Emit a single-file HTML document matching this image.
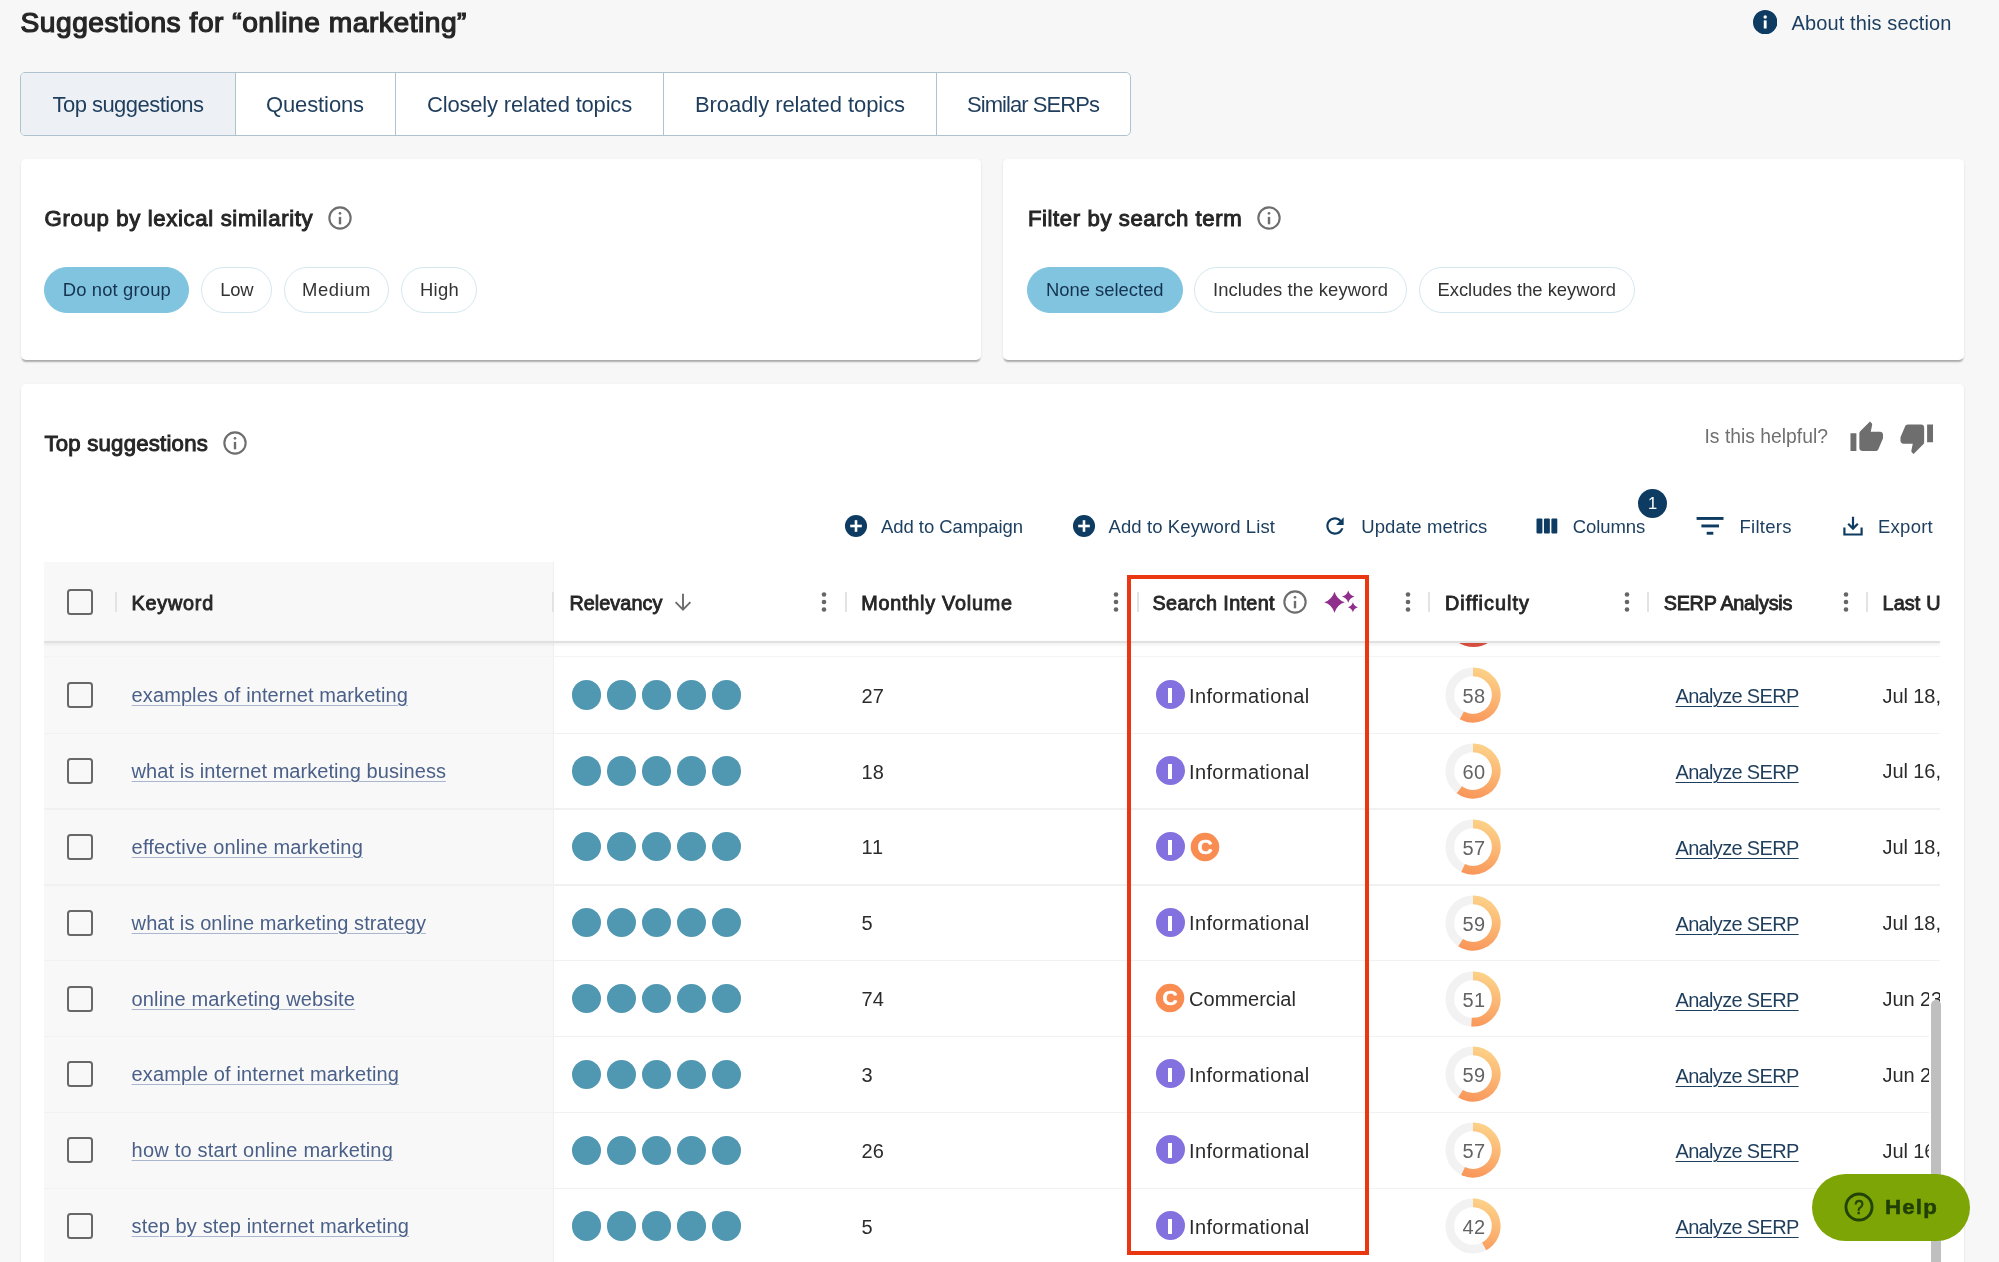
<!DOCTYPE html><html lang="en"><head><meta charset="utf-8"><title>Suggestions for online marketing</title><style>
*{box-sizing:border-box;margin:0;padding:0}
html,body{width:1999px;height:1262px;overflow:hidden;background:#f7f7f7;font-family:"Liberation Sans",sans-serif}
#root{position:absolute;left:0;top:0;width:1999px;height:1262px;overflow:hidden;will-change:transform}
.a{position:absolute}
.t{position:absolute;white-space:nowrap}
.card{position:absolute;background:#fff;border-radius:5px;box-shadow:0 2.200px 1.800px -1px rgba(0,0,0,.28),0 1px 3px rgba(0,0,0,.08)}
.pill{position:absolute;top:266.500px;height:46.5px;border-radius:23.500px;border:1.3px solid #d5e7ef;background:#fff}
.pill.on{background:#80c4e0;border-color:#80c4e0}
.cb{position:absolute;width:26px;height:26px;border:2.800px solid #686868;border-radius:3.500px}
.dot{position:absolute;width:29.4px;height:29.4px;border-radius:50%;background:#5097b1}
.sep{position:absolute;left:44px;width:1896px;height:1.400px;background:#f1f1f1}
.ib{position:absolute;width:29.100px;height:29.100px;border-radius:50%}
.vsep{position:absolute;width:2px;height:20px;top:592px;background:#e3e3e3}
</style></head><body><div id="root">
<svg class="a" style="left:1752.500px;top:9.700px" width="24.400" height="24.400" viewBox="0 0 24 24"><circle cx="12" cy="12" r="12" fill="#0d3b61"/><rect x="10.6" y="10.2" width="2.8" height="8" fill="#fff"/><circle cx="12" cy="6.9" r="1.7" fill="#fff"/></svg>
<div class="a" style="left:20.300px;top:72px;width:1110.500px;height:63.700px;border:1.300px solid #b0c2ce;border-radius:5px;background:#fff;overflow:hidden"><div class="a" style="left:0;top:0;width:214px;height:64px;background:#edf1f5"></div><div class="a" style="left:213.3px;top:0;width:1.300px;height:64px;background:#b0c2ce"></div><div class="a" style="left:373.7px;top:0;width:1.300px;height:64px;background:#b0c2ce"></div><div class="a" style="left:641.7px;top:0;width:1.300px;height:64px;background:#b0c2ce"></div><div class="a" style="left:914.7px;top:0;width:1.300px;height:64px;background:#b0c2ce"></div></div>
<div class="card" style="left:21px;top:159.250px;width:960.200px;height:200.450px"></div>
<div class="card" style="left:1003px;top:159.250px;width:961px;height:200.450px"></div>
<div class="card" style="left:21px;top:384.400px;width:1943px;height:900px"></div>
<svg class="a" style="left:327.2px;top:205.0px" width="26" height="26" viewBox="0 0 26 26"><circle cx="13" cy="13" r="10.65" fill="none" stroke="#6e6e6e" stroke-width="2.100"/><rect x="11.800" y="11.900" width="2.400" height="7.400" fill="#6e6e6e"/><circle cx="13" cy="8.300" r="1.350" fill="#6e6e6e"/></svg>
<svg class="a" style="left:1255.5px;top:205.1px" width="26" height="26" viewBox="0 0 26 26"><circle cx="13" cy="13" r="10.65" fill="none" stroke="#6e6e6e" stroke-width="2.100"/><rect x="11.800" y="11.900" width="2.400" height="7.400" fill="#6e6e6e"/><circle cx="13" cy="8.300" r="1.350" fill="#6e6e6e"/></svg>
<svg class="a" style="left:222.0px;top:429.5px" width="26" height="26" viewBox="0 0 26 26"><circle cx="13" cy="13" r="10.65" fill="none" stroke="#6e6e6e" stroke-width="2.100"/><rect x="11.800" y="11.900" width="2.400" height="7.400" fill="#6e6e6e"/><circle cx="13" cy="8.300" r="1.350" fill="#6e6e6e"/></svg>
<svg class="a" style="left:1282.3px;top:589.0px" width="26" height="26" viewBox="0 0 26 26"><circle cx="13" cy="13" r="10.65" fill="none" stroke="#6e6e6e" stroke-width="2.100"/><rect x="11.800" y="11.900" width="2.400" height="7.400" fill="#6e6e6e"/><circle cx="13" cy="8.300" r="1.350" fill="#6e6e6e"/></svg>
<div class="pill on" style="left:43.8px;width:145.6px"></div>
<div class="pill" style="left:201.2px;width:70.8px"></div>
<div class="pill" style="left:284.0px;width:105.3px"></div>
<div class="pill" style="left:401.0px;width:76.2px"></div>
<div class="pill on" style="left:1027.0px;width:155.6px"></div>
<div class="pill" style="left:1194.2px;width:213.1px"></div>
<div class="pill" style="left:1418.5px;width:216.0px"></div>
<svg class="a" style="left:1848.700px;top:420.200px" width="35.500" height="35.500" viewBox="0 0 24 24"><path fill="#6e6e6e" d="M1 21h4V9H1v12zm22-11c0-1.1-.9-2-2-2h-6.31l.95-4.57.03-.32c0-.41-.17-.79-.44-1.06L14.17 1 7.59 7.59C7.22 7.95 7 8.45 7 9v10c0 1.1.9 2 2 2h9c.83 0 1.54-.5 1.84-1.22l3.02-7.05c.09-.23.14-.47.14-.73v-2z"/></svg>
<svg class="a" style="left:1898.500px;top:419.600px" width="35.500" height="35.500" viewBox="0 0 24 24"><path fill="#6e6e6e" d="M15 3H6c-.83 0-1.54.5-1.84 1.22l-3.02 7.05c-.09.23-.14.47-.14.73v2c0 1.1.9 2 2 2h6.31l-.95 4.57-.03.32c0 .41.17.79.44 1.06L9.83 23l6.59-6.59c.36-.36.58-.86.58-1.41V5c0-1.1-.9-2-2-2zm4 0v12h4V3h-4z"/></svg>
<svg class="a" style="left:844.0px;top:514.0px" width="24" height="24" viewBox="0 0 24 24"><circle cx="12" cy="12" r="11.050" fill="#0d3b61"/><rect x="6.2" y="10.7" width="11.6" height="2.6" fill="#fff"/><rect x="10.7" y="6.2" width="2.6" height="11.6" fill="#fff"/></svg>
<svg class="a" style="left:1071.6px;top:514.0px" width="24" height="24" viewBox="0 0 24 24"><circle cx="12" cy="12" r="11.050" fill="#0d3b61"/><rect x="6.2" y="10.7" width="11.6" height="2.6" fill="#fff"/><rect x="10.7" y="6.2" width="2.6" height="11.6" fill="#fff"/></svg>
<svg class="a" style="left:1322px;top:513px" width="26" height="26" viewBox="0 0 24 24"><path fill="#0d3b61" d="M17.65 6.35C16.2 4.9 14.21 4 12 4c-4.42 0-7.99 3.58-7.99 8s3.57 8 7.99 8c3.73 0 6.84-2.55 7.73-6h-2.08c-.82 2.33-3.04 4-5.65 4-3.31 0-6-2.69-6-6s2.690-6 6-6c1.660 0 3.140.690 4.220 1.780L13 11h7V4l-2.350 2.350z"/></svg>
<svg class="a" style="left:1536px;top:517px" width="23" height="18" viewBox="0 0 23 18"><rect x="0.5" y="1.600" width="5.9" height="15" rx="1" fill="#0d3b61"/><rect x="7.950" y="1.600" width="5.9" height="15" rx="1" fill="#0d3b61"/><rect x="15.400" y="1.600" width="5.9" height="15" rx="1" fill="#0d3b61"/></svg>
<div class="a" style="left:1638px;top:488.800px;width:29.400px;height:29.400px;border-radius:50%;background:#0d3b61;color:#fff;font-size:16.500px;line-height:29.400px;text-align:center">1</div>
<svg class="a" style="left:1696px;top:515px" width="28" height="22" viewBox="0 0 28 22"><rect x="0.600" y="2" width="26.9" height="2.900" fill="#0d3b61"/><rect x="5.400" y="9.500" width="17.6" height="2.900" fill="#0d3b61"/><rect x="10.700" y="16.800" width="6.600" height="2.900" fill="#0d3b61"/></svg>
<svg class="a" style="left:1840.600px;top:514px" width="24" height="24" viewBox="0 0 24 24"><path fill="none" stroke="#0d3b61" stroke-width="2.200" d="M3.4 13.500v7h17.2v-7M12 2.700v11.500M7.200 9.800l4.800 4.800 4.800-4.800"/></svg>
<div class="a" style="left:44px;top:562px;width:510.400px;height:720px;background:#f8f8f8;border-right:1.500px solid #efefef"></div>
<div class="a" style="left:1440px;top:642px;width:70px;height:8px;overflow:hidden"><div class="a" style="left:5.900px;top:-50.400px;width:55px;height:55px;border-radius:50%;border:8.700px solid #dc5140"></div></div>
<div class="a" style="left:44px;top:641.200px;width:1896px;height:2.300px;background:#e1e1e1;box-shadow:0 1.500px 3px rgba(0,0,0,.09)"></div>
<div class="sep" style="top:656px;background:#f4f4f4"></div>
<div class="sep" style="top:732.5px"></div>
<div class="sep" style="top:808.4px"></div>
<div class="sep" style="top:884.2px"></div>
<div class="sep" style="top:960.1px"></div>
<div class="sep" style="top:1036.0px"></div>
<div class="sep" style="top:1111.8px"></div>
<div class="sep" style="top:1187.7px"></div>
<div class="cb" style="left:67px;top:589px"></div>
<div class="vsep" style="left:114.5px"></div>
<div class="vsep" style="left:551.5px"></div>
<div class="vsep" style="left:844.5px"></div>
<div class="vsep" style="left:1136.5px"></div>
<div class="vsep" style="left:1428.0px"></div>
<div class="vsep" style="left:1647.3px"></div>
<div class="vsep" style="left:1866.0px"></div>
<svg class="a" style="left:821.2px;top:591.0px" width="6" height="22" viewBox="0 0 6 22"><circle cx="3" cy="3.500" r="2.300" fill="#666"/><circle cx="3" cy="11" r="2.3" fill="#666"/><circle cx="3" cy="18.5" r="2.3" fill="#666"/></svg>
<svg class="a" style="left:1112.8px;top:591.0px" width="6" height="22" viewBox="0 0 6 22"><circle cx="3" cy="3.500" r="2.300" fill="#666"/><circle cx="3" cy="11" r="2.3" fill="#666"/><circle cx="3" cy="18.5" r="2.3" fill="#666"/></svg>
<svg class="a" style="left:1404.5px;top:591.0px" width="6" height="22" viewBox="0 0 6 22"><circle cx="3" cy="3.500" r="2.300" fill="#666"/><circle cx="3" cy="11" r="2.3" fill="#666"/><circle cx="3" cy="18.5" r="2.3" fill="#666"/></svg>
<svg class="a" style="left:1623.5px;top:591.0px" width="6" height="22" viewBox="0 0 6 22"><circle cx="3" cy="3.500" r="2.300" fill="#666"/><circle cx="3" cy="11" r="2.3" fill="#666"/><circle cx="3" cy="18.5" r="2.3" fill="#666"/></svg>
<svg class="a" style="left:1842.7px;top:591.0px" width="6" height="22" viewBox="0 0 6 22"><circle cx="3" cy="3.500" r="2.300" fill="#666"/><circle cx="3" cy="11" r="2.3" fill="#666"/><circle cx="3" cy="18.5" r="2.3" fill="#666"/></svg>
<svg class="a" style="left:673.300px;top:591px" width="20" height="22" viewBox="0 0 20 22"><path fill="none" stroke="#6b6b6b" stroke-width="1.900" d="M10 2.800v15.500M2.600 11.200l7.400 7.400 7.400-7.400"/></svg>
<svg class="a" style="left:1320px;top:586px" width="42" height="32" viewBox="0 0 42 32"><g fill="#902e8b"><path d="M14.50 5.70 Q16.95 13.68 24.70 16.20 Q16.95 18.72 14.50 26.70 Q12.05 18.72 4.30 16.20 Q12.05 13.68 14.50 5.70Z"/><path d="M28.25 4.40 Q29.64 9.24 34.55 10.60 Q29.64 11.96 28.25 16.80 Q26.86 11.96 21.95 10.60 Q26.86 9.24 28.25 4.40Z"/><path d="M32.90 16.35 Q34.00 20.17 37.90 21.25 Q34.00 22.33 32.90 26.15 Q31.80 22.33 27.90 21.25 Q31.80 20.17 32.90 16.35Z"/></g></svg>
<div class="a" style="left:1870px;top:562px;width:70px;height:720px;overflow:hidden">
<div class="t" style="left:12.500px;top:27px;font-size:19.800px;line-height:28px;font-weight:400;color:#262626;-webkit-text-stroke:0.870px #262626;letter-spacing:0.150px">Last U</div>
<div class="t" style="left:12.5px;top:119.5px;font-size:20px;line-height:28px;color:#2b2b2b;letter-spacing:-0.080px">Jul 18,</div>
<div class="t" style="left:12.5px;top:195.4px;font-size:20px;line-height:28px;color:#2b2b2b;letter-spacing:-0.080px">Jul 16,</div>
<div class="t" style="left:12.5px;top:271.2px;font-size:20px;line-height:28px;color:#2b2b2b;letter-spacing:-0.080px">Jul 18,</div>
<div class="t" style="left:12.5px;top:347.1px;font-size:20px;line-height:28px;color:#2b2b2b;letter-spacing:-0.080px">Jul 18,</div>
<div class="t" style="left:12.5px;top:423.0px;font-size:20px;line-height:28px;color:#2b2b2b;letter-spacing:-0.080px">Jun 23</div>
<div class="t" style="left:12.5px;top:498.8px;font-size:20px;line-height:28px;color:#2b2b2b;letter-spacing:-0.080px">Jun 23</div>
<div class="t" style="left:12.5px;top:574.7px;font-size:20px;line-height:28px;color:#2b2b2b;letter-spacing:-0.080px">Jul 16</div>
<div class="t" style="left:12.5px;top:650.6px;font-size:20px;line-height:28px;color:#2b2b2b;letter-spacing:-0.080px">Jul 16</div>
</div>
<div class="cb" style="left:67px;top:682.0px"></div>
<div class="dot" style="left:571.7px;top:680.3px"></div>
<div class="dot" style="left:606.7px;top:680.3px"></div>
<div class="dot" style="left:641.8px;top:680.3px"></div>
<div class="dot" style="left:676.8px;top:680.3px"></div>
<div class="dot" style="left:711.9px;top:680.3px"></div>
<div class="ib" style="left:1155.5px;top:680.1px;background:#8271de"><div class="a" style="left:12.350px;top:8.150px;width:4.400px;height:14.700px;background:#fff"></div></div>
<svg class="a" style="left:1443.4px;top:665.0px" width="60" height="60" viewBox="1443.4 665.0 60 60"><defs><linearGradient id="g695_58" gradientUnits="userSpaceOnUse" x1="1483.4" y1="668.0" x2="1468.4" y2="722.0"><stop offset="0" stop-color="#fdd389"/><stop offset="1" stop-color="#f9965a"/></linearGradient></defs><circle cx="1473.4" cy="695.0" r="23.2" fill="none" stroke="#f2f2f2" stroke-width="8.7"/><path d="M1473.40 671.80 A23.2 23.2 0 1 1 1462.22 715.33" fill="none" stroke="url(#g695_58)" stroke-width="8.7"/><text x="1474.3" y="703.3" text-anchor="middle" font-family="Liberation Sans, sans-serif" font-size="20" fill="#636363" letter-spacing="0.300">58</text></svg>
<div class="cb" style="left:67px;top:757.9px"></div>
<div class="dot" style="left:571.7px;top:756.2px"></div>
<div class="dot" style="left:606.7px;top:756.2px"></div>
<div class="dot" style="left:641.8px;top:756.2px"></div>
<div class="dot" style="left:676.8px;top:756.2px"></div>
<div class="dot" style="left:711.9px;top:756.2px"></div>
<div class="ib" style="left:1155.5px;top:756.0px;background:#8271de"><div class="a" style="left:12.350px;top:8.150px;width:4.400px;height:14.700px;background:#fff"></div></div>
<svg class="a" style="left:1443.4px;top:740.9px" width="60" height="60" viewBox="1443.4 740.9 60 60"><defs><linearGradient id="g770_60" gradientUnits="userSpaceOnUse" x1="1483.4" y1="743.9" x2="1468.4" y2="797.9"><stop offset="0" stop-color="#fdd389"/><stop offset="1" stop-color="#f9965a"/></linearGradient></defs><circle cx="1473.4" cy="770.9" r="23.2" fill="none" stroke="#f2f2f2" stroke-width="8.7"/><path d="M1473.40 747.70 A23.2 23.2 0 1 1 1459.76 789.67" fill="none" stroke="url(#g770_60)" stroke-width="8.7"/><text x="1474.3" y="779.2" text-anchor="middle" font-family="Liberation Sans, sans-serif" font-size="20" fill="#636363" letter-spacing="0.300">60</text></svg>
<div class="cb" style="left:67px;top:833.7px"></div>
<div class="dot" style="left:571.7px;top:832.0px"></div>
<div class="dot" style="left:606.7px;top:832.0px"></div>
<div class="dot" style="left:641.8px;top:832.0px"></div>
<div class="dot" style="left:676.8px;top:832.0px"></div>
<div class="dot" style="left:711.9px;top:832.0px"></div>
<div class="ib" style="left:1155.5px;top:832.1px;background:#8271de"><div class="a" style="left:12.350px;top:8.150px;width:4.400px;height:14.700px;background:#fff"></div></div>
<svg class="a" style="left:1190.2px;top:831.5px" width="30" height="30" viewBox="0 0 30 30"><circle cx="15" cy="15" r="14.300" fill="#f98c51"/><text x="15" y="21.900" text-anchor="middle" font-family="Liberation Sans, sans-serif" font-weight="700" font-size="21" fill="#fff" stroke="#fff" stroke-width="0.500">C</text></svg>
<svg class="a" style="left:1443.4px;top:816.7px" width="60" height="60" viewBox="1443.4 816.7 60 60"><defs><linearGradient id="g846_57" gradientUnits="userSpaceOnUse" x1="1483.4" y1="819.7" x2="1468.4" y2="873.7"><stop offset="0" stop-color="#fdd389"/><stop offset="1" stop-color="#f9965a"/></linearGradient></defs><circle cx="1473.4" cy="846.7" r="23.2" fill="none" stroke="#f2f2f2" stroke-width="8.7"/><path d="M1473.40 823.50 A23.2 23.2 0 1 1 1463.52 867.69" fill="none" stroke="url(#g846_57)" stroke-width="8.7"/><text x="1474.3" y="855.0" text-anchor="middle" font-family="Liberation Sans, sans-serif" font-size="20" fill="#636363" letter-spacing="0.300">57</text></svg>
<div class="cb" style="left:67px;top:909.6px"></div>
<div class="dot" style="left:571.7px;top:907.9px"></div>
<div class="dot" style="left:606.7px;top:907.9px"></div>
<div class="dot" style="left:641.8px;top:907.9px"></div>
<div class="dot" style="left:676.8px;top:907.9px"></div>
<div class="dot" style="left:711.9px;top:907.9px"></div>
<div class="ib" style="left:1155.5px;top:907.8px;background:#8271de"><div class="a" style="left:12.350px;top:8.150px;width:4.400px;height:14.700px;background:#fff"></div></div>
<svg class="a" style="left:1443.4px;top:892.6px" width="60" height="60" viewBox="1443.4 892.6 60 60"><defs><linearGradient id="g922_59" gradientUnits="userSpaceOnUse" x1="1483.4" y1="895.6" x2="1468.4" y2="949.6"><stop offset="0" stop-color="#fdd389"/><stop offset="1" stop-color="#f9965a"/></linearGradient></defs><circle cx="1473.4" cy="922.6" r="23.2" fill="none" stroke="#f2f2f2" stroke-width="8.7"/><path d="M1473.40 899.40 A23.2 23.2 0 1 1 1460.97 942.19" fill="none" stroke="url(#g922_59)" stroke-width="8.7"/><text x="1474.3" y="930.9" text-anchor="middle" font-family="Liberation Sans, sans-serif" font-size="20" fill="#636363" letter-spacing="0.300">59</text></svg>
<div class="cb" style="left:67px;top:985.5px"></div>
<div class="dot" style="left:571.7px;top:983.8px"></div>
<div class="dot" style="left:606.7px;top:983.8px"></div>
<div class="dot" style="left:641.8px;top:983.8px"></div>
<div class="dot" style="left:676.8px;top:983.8px"></div>
<div class="dot" style="left:711.9px;top:983.8px"></div>
<svg class="a" style="left:1155.1px;top:983.3px" width="30" height="30" viewBox="0 0 30 30"><circle cx="15" cy="15" r="14.300" fill="#f98c51"/><text x="15" y="21.900" text-anchor="middle" font-family="Liberation Sans, sans-serif" font-weight="700" font-size="21" fill="#fff" stroke="#fff" stroke-width="0.500">C</text></svg>
<svg class="a" style="left:1443.4px;top:968.5px" width="60" height="60" viewBox="1443.4 968.5 60 60"><defs><linearGradient id="g998_51" gradientUnits="userSpaceOnUse" x1="1483.4" y1="971.5" x2="1468.4" y2="1025.5"><stop offset="0" stop-color="#fdd389"/><stop offset="1" stop-color="#f9965a"/></linearGradient></defs><circle cx="1473.4" cy="998.5" r="23.2" fill="none" stroke="#f2f2f2" stroke-width="8.7"/><path d="M1473.40 975.30 A23.2 23.2 0 1 1 1471.94 1021.65" fill="none" stroke="url(#g998_51)" stroke-width="8.7"/><text x="1474.3" y="1006.8" text-anchor="middle" font-family="Liberation Sans, sans-serif" font-size="20" fill="#636363" letter-spacing="0.300">51</text></svg>
<div class="cb" style="left:67px;top:1061.3px"></div>
<div class="dot" style="left:571.7px;top:1059.6px"></div>
<div class="dot" style="left:606.7px;top:1059.6px"></div>
<div class="dot" style="left:641.8px;top:1059.6px"></div>
<div class="dot" style="left:676.8px;top:1059.6px"></div>
<div class="dot" style="left:711.9px;top:1059.6px"></div>
<div class="ib" style="left:1155.5px;top:1059.4px;background:#8271de"><div class="a" style="left:12.350px;top:8.150px;width:4.400px;height:14.700px;background:#fff"></div></div>
<svg class="a" style="left:1443.4px;top:1044.3px" width="60" height="60" viewBox="1443.4 1044.3 60 60"><defs><linearGradient id="g1074_59" gradientUnits="userSpaceOnUse" x1="1483.4" y1="1047.3" x2="1468.4" y2="1101.3"><stop offset="0" stop-color="#fdd389"/><stop offset="1" stop-color="#f9965a"/></linearGradient></defs><circle cx="1473.4" cy="1074.3" r="23.2" fill="none" stroke="#f2f2f2" stroke-width="8.7"/><path d="M1473.40 1051.10 A23.2 23.2 0 1 1 1460.97 1093.89" fill="none" stroke="url(#g1074_59)" stroke-width="8.7"/><text x="1474.3" y="1082.6" text-anchor="middle" font-family="Liberation Sans, sans-serif" font-size="20" fill="#636363" letter-spacing="0.300">59</text></svg>
<div class="cb" style="left:67px;top:1137.2px"></div>
<div class="dot" style="left:571.7px;top:1135.5px"></div>
<div class="dot" style="left:606.7px;top:1135.5px"></div>
<div class="dot" style="left:641.8px;top:1135.5px"></div>
<div class="dot" style="left:676.8px;top:1135.5px"></div>
<div class="dot" style="left:711.9px;top:1135.5px"></div>
<div class="ib" style="left:1155.5px;top:1135.3px;background:#8271de"><div class="a" style="left:12.350px;top:8.150px;width:4.400px;height:14.700px;background:#fff"></div></div>
<svg class="a" style="left:1443.4px;top:1120.2px" width="60" height="60" viewBox="1443.4 1120.2 60 60"><defs><linearGradient id="g1150_57" gradientUnits="userSpaceOnUse" x1="1483.4" y1="1123.2" x2="1468.4" y2="1177.2"><stop offset="0" stop-color="#fdd389"/><stop offset="1" stop-color="#f9965a"/></linearGradient></defs><circle cx="1473.4" cy="1150.2" r="23.2" fill="none" stroke="#f2f2f2" stroke-width="8.7"/><path d="M1473.40 1127.00 A23.2 23.2 0 1 1 1463.52 1171.19" fill="none" stroke="url(#g1150_57)" stroke-width="8.7"/><text x="1474.3" y="1158.5" text-anchor="middle" font-family="Liberation Sans, sans-serif" font-size="20" fill="#636363" letter-spacing="0.300">57</text></svg>
<div class="cb" style="left:67px;top:1213.1px"></div>
<div class="dot" style="left:571.7px;top:1211.4px"></div>
<div class="dot" style="left:606.7px;top:1211.4px"></div>
<div class="dot" style="left:641.8px;top:1211.4px"></div>
<div class="dot" style="left:676.8px;top:1211.4px"></div>
<div class="dot" style="left:711.9px;top:1211.4px"></div>
<div class="ib" style="left:1155.5px;top:1211.2px;background:#8271de"><div class="a" style="left:12.350px;top:8.150px;width:4.400px;height:14.700px;background:#fff"></div></div>
<svg class="a" style="left:1443.4px;top:1196.1px" width="60" height="60" viewBox="1443.4 1196.1 60 60"><defs><linearGradient id="g1226_42" gradientUnits="userSpaceOnUse" x1="1483.4" y1="1199.1" x2="1468.4" y2="1253.1"><stop offset="0" stop-color="#fdd389"/><stop offset="1" stop-color="#f9965a"/></linearGradient></defs><circle cx="1473.4" cy="1226.1" r="23.2" fill="none" stroke="#f2f2f2" stroke-width="8.7"/><path d="M1473.40 1202.90 A23.2 23.2 0 0 1 1484.58 1246.43" fill="none" stroke="url(#g1226_42)" stroke-width="8.7"/><text x="1474.3" y="1234.4" text-anchor="middle" font-family="Liberation Sans, sans-serif" font-size="20" fill="#636363" letter-spacing="0.300">42</text></svg>
<div class="t" style="left:20.5px;top:3.2px;font-size:28.2px;line-height:39px;font-weight:400;color:#262626;letter-spacing:0.506px;-webkit-text-stroke:1.24px #262626;">Suggestions for “online marketing”</div>
<div class="t" style="left:1791.5px;top:9.1px;font-size:20px;line-height:28px;font-weight:400;color:#1d3f60;letter-spacing:0.118px;">About this section</div>
<div class="t" style="left:52.5px;top:89.1px;font-size:22px;line-height:31px;font-weight:400;color:#1f3d5c;letter-spacing:-0.533px;">Top suggestions</div>
<div class="t" style="left:266.0px;top:89.1px;font-size:22px;line-height:31px;font-weight:400;color:#1f3d5c;letter-spacing:-0.118px;">Questions</div>
<div class="t" style="left:427.0px;top:89.1px;font-size:22px;line-height:31px;font-weight:400;color:#1f3d5c;letter-spacing:-0.187px;">Closely related topics</div>
<div class="t" style="left:695.0px;top:89.1px;font-size:22px;line-height:31px;font-weight:400;color:#1f3d5c;letter-spacing:-0.071px;">Broadly related topics</div>
<div class="t" style="left:967.0px;top:89.1px;font-size:22px;line-height:31px;font-weight:400;color:#1f3d5c;letter-spacing:-0.942px;">Similar SERPs</div>
<div class="t" style="left:44.5px;top:203.4px;font-size:22.2px;line-height:31px;font-weight:400;color:#262626;letter-spacing:0.640px;-webkit-text-stroke:0.98px #262626;">Group by lexical similarity</div>
<div class="t" style="left:1028.0px;top:203.4px;font-size:22.2px;line-height:31px;font-weight:400;color:#262626;letter-spacing:0.571px;-webkit-text-stroke:0.98px #262626;">Filter by search term</div>
<div class="t" style="left:62.7px;top:277.2px;font-size:18.4px;line-height:26px;font-weight:400;color:#15334f;letter-spacing:0.163px;">Do not group</div>
<div class="t" style="left:220.2px;top:277.2px;font-size:18.4px;line-height:26px;font-weight:400;color:#333;letter-spacing:-0.250px;">Low</div>
<div class="t" style="left:302.0px;top:277.2px;font-size:18.4px;line-height:26px;font-weight:400;color:#333;letter-spacing:0.596px;">Medium</div>
<div class="t" style="left:420.0px;top:277.2px;font-size:18.4px;line-height:26px;font-weight:400;color:#333;letter-spacing:0.293px;">High</div>
<div class="t" style="left:1046.0px;top:277.2px;font-size:18.4px;line-height:26px;font-weight:400;color:#15334f;letter-spacing:0.002px;">None selected</div>
<div class="t" style="left:1213.0px;top:277.2px;font-size:18.4px;line-height:26px;font-weight:400;color:#333;letter-spacing:0.112px;">Includes the keyword</div>
<div class="t" style="left:1437.5px;top:277.2px;font-size:18.4px;line-height:26px;font-weight:400;color:#333;letter-spacing:-0.020px;">Excludes the keyword</div>
<div class="t" style="left:44.5px;top:427.5px;font-size:22.2px;line-height:31px;font-weight:400;color:#262626;letter-spacing:0.209px;-webkit-text-stroke:0.98px #262626;">Top suggestions</div>
<div class="t" style="left:1704.5px;top:423.4px;font-size:19.3px;line-height:27px;font-weight:400;color:#707070;letter-spacing:0.015px;">Is this helpful?</div>
<div class="t" style="left:881.0px;top:513.5px;font-size:18.5px;line-height:26px;font-weight:400;color:#1d3f60;letter-spacing:-0.064px;">Add to Campaign</div>
<div class="t" style="left:1108.5px;top:513.5px;font-size:18.5px;line-height:26px;font-weight:400;color:#1d3f60;letter-spacing:0.104px;">Add to Keyword List</div>
<div class="t" style="left:1361.2px;top:513.5px;font-size:18.5px;line-height:26px;font-weight:400;color:#1d3f60;letter-spacing:0.135px;">Update metrics</div>
<div class="t" style="left:1572.7px;top:513.5px;font-size:18.5px;line-height:26px;font-weight:400;color:#1d3f60;letter-spacing:-0.057px;">Columns</div>
<div class="t" style="left:1739.5px;top:513.5px;font-size:18.5px;line-height:26px;font-weight:400;color:#1d3f60;letter-spacing:0.275px;">Filters</div>
<div class="t" style="left:1878.0px;top:513.5px;font-size:18.5px;line-height:26px;font-weight:400;color:#1d3f60;letter-spacing:0.255px;">Export</div>
<div class="t" style="left:131.5px;top:588.5px;font-size:19.8px;line-height:28px;font-weight:400;color:#262626;letter-spacing:0.790px;-webkit-text-stroke:0.87px #262626;">Keyword</div>
<div class="t" style="left:569.4px;top:588.5px;font-size:19.8px;line-height:28px;font-weight:400;color:#262626;letter-spacing:0.071px;-webkit-text-stroke:0.87px #262626;">Relevancy</div>
<div class="t" style="left:861.2px;top:588.5px;font-size:19.8px;line-height:28px;font-weight:400;color:#262626;letter-spacing:0.768px;-webkit-text-stroke:0.87px #262626;">Monthly Volume</div>
<div class="t" style="left:1152.5px;top:588.5px;font-size:19.8px;line-height:28px;font-weight:400;color:#262626;letter-spacing:0.371px;-webkit-text-stroke:0.87px #262626;">Search Intent</div>
<div class="t" style="left:1445.0px;top:588.5px;font-size:19.8px;line-height:28px;font-weight:400;color:#262626;letter-spacing:1.061px;-webkit-text-stroke:0.87px #262626;">Difficulty</div>
<div class="t" style="left:1663.7px;top:588.5px;font-size:19.8px;line-height:28px;font-weight:400;color:#262626;letter-spacing:-0.244px;-webkit-text-stroke:0.87px #262626;">SERP Analysis</div>
<div class="t" style="left:131.6px;top:681.0px;font-size:20px;line-height:28px;font-weight:400;color:#4a6088;letter-spacing:0.098px;text-decoration:underline;text-decoration-thickness:1.2px;text-underline-offset:3px;text-decoration-color:#a9b6cd;">examples of internet marketing</div>
<div class="t" style="left:861.5px;top:681.7px;font-size:20px;line-height:28px;font-weight:400;color:#2b2b2b;letter-spacing:0.125px;">27</div>
<div class="t" style="left:1189.0px;top:681.7px;font-size:20px;line-height:28px;font-weight:400;color:#2b2b2b;letter-spacing:0.375px;">Informational</div>
<div class="t" style="left:1675.5px;top:682.2px;font-size:20px;line-height:28px;font-weight:400;color:#1f3d5c;letter-spacing:-0.673px;text-decoration:underline;text-decoration-thickness:1.4px;text-underline-offset:2.5px;">Analyze SERP</div>
<div class="t" style="left:131.6px;top:756.9px;font-size:20px;line-height:28px;font-weight:400;color:#4a6088;letter-spacing:0.058px;text-decoration:underline;text-decoration-thickness:1.2px;text-underline-offset:3px;text-decoration-color:#a9b6cd;">what is internet marketing business</div>
<div class="t" style="left:861.5px;top:757.6px;font-size:20px;line-height:28px;font-weight:400;color:#2b2b2b;letter-spacing:0.125px;">18</div>
<div class="t" style="left:1189.0px;top:757.6px;font-size:20px;line-height:28px;font-weight:400;color:#2b2b2b;letter-spacing:0.375px;">Informational</div>
<div class="t" style="left:1675.5px;top:758.1px;font-size:20px;line-height:28px;font-weight:400;color:#1f3d5c;letter-spacing:-0.673px;text-decoration:underline;text-decoration-thickness:1.4px;text-underline-offset:2.5px;">Analyze SERP</div>
<div class="t" style="left:131.6px;top:832.7px;font-size:20px;line-height:28px;font-weight:400;color:#4a6088;letter-spacing:0.191px;text-decoration:underline;text-decoration-thickness:1.2px;text-underline-offset:3px;text-decoration-color:#a9b6cd;">effective online marketing</div>
<div class="t" style="left:861.5px;top:833.4px;font-size:20px;line-height:28px;font-weight:400;color:#2b2b2b;letter-spacing:0.867px;">11</div>
<div class="t" style="left:1675.5px;top:833.9px;font-size:20px;line-height:28px;font-weight:400;color:#1f3d5c;letter-spacing:-0.673px;text-decoration:underline;text-decoration-thickness:1.4px;text-underline-offset:2.5px;">Analyze SERP</div>
<div class="t" style="left:131.6px;top:908.6px;font-size:20px;line-height:28px;font-weight:400;color:#4a6088;letter-spacing:0.095px;text-decoration:underline;text-decoration-thickness:1.2px;text-underline-offset:3px;text-decoration-color:#a9b6cd;">what is online marketing strategy</div>
<div class="t" style="left:861.5px;top:909.3px;font-size:20px;line-height:28px;font-weight:400;color:#2b2b2b;letter-spacing:-0.125px;">5</div>
<div class="t" style="left:1189.0px;top:909.3px;font-size:20px;line-height:28px;font-weight:400;color:#2b2b2b;letter-spacing:0.375px;">Informational</div>
<div class="t" style="left:1675.5px;top:909.8px;font-size:20px;line-height:28px;font-weight:400;color:#1f3d5c;letter-spacing:-0.673px;text-decoration:underline;text-decoration-thickness:1.4px;text-underline-offset:2.5px;">Analyze SERP</div>
<div class="t" style="left:131.6px;top:984.5px;font-size:20px;line-height:28px;font-weight:400;color:#4a6088;letter-spacing:0.136px;text-decoration:underline;text-decoration-thickness:1.2px;text-underline-offset:3px;text-decoration-color:#a9b6cd;">online marketing website</div>
<div class="t" style="left:861.5px;top:985.2px;font-size:20px;line-height:28px;font-weight:400;color:#2b2b2b;letter-spacing:0.125px;">74</div>
<div class="t" style="left:1189.0px;top:985.2px;font-size:20px;line-height:28px;font-weight:400;color:#2b2b2b;letter-spacing:0.031px;">Commercial</div>
<div class="t" style="left:1675.5px;top:985.7px;font-size:20px;line-height:28px;font-weight:400;color:#1f3d5c;letter-spacing:-0.673px;text-decoration:underline;text-decoration-thickness:1.4px;text-underline-offset:2.5px;">Analyze SERP</div>
<div class="t" style="left:131.6px;top:1060.3px;font-size:20px;line-height:28px;font-weight:400;color:#4a6088;letter-spacing:0.136px;text-decoration:underline;text-decoration-thickness:1.2px;text-underline-offset:3px;text-decoration-color:#a9b6cd;">example of internet marketing</div>
<div class="t" style="left:861.5px;top:1061.0px;font-size:20px;line-height:28px;font-weight:400;color:#2b2b2b;letter-spacing:-0.125px;">3</div>
<div class="t" style="left:1189.0px;top:1061.0px;font-size:20px;line-height:28px;font-weight:400;color:#2b2b2b;letter-spacing:0.375px;">Informational</div>
<div class="t" style="left:1675.5px;top:1061.5px;font-size:20px;line-height:28px;font-weight:400;color:#1f3d5c;letter-spacing:-0.673px;text-decoration:underline;text-decoration-thickness:1.4px;text-underline-offset:2.5px;">Analyze SERP</div>
<div class="t" style="left:131.6px;top:1136.2px;font-size:20px;line-height:28px;font-weight:400;color:#4a6088;letter-spacing:0.197px;text-decoration:underline;text-decoration-thickness:1.2px;text-underline-offset:3px;text-decoration-color:#a9b6cd;">how to start online marketing</div>
<div class="t" style="left:861.5px;top:1136.9px;font-size:20px;line-height:28px;font-weight:400;color:#2b2b2b;letter-spacing:0.125px;">26</div>
<div class="t" style="left:1189.0px;top:1136.9px;font-size:20px;line-height:28px;font-weight:400;color:#2b2b2b;letter-spacing:0.375px;">Informational</div>
<div class="t" style="left:1675.5px;top:1137.4px;font-size:20px;line-height:28px;font-weight:400;color:#1f3d5c;letter-spacing:-0.673px;text-decoration:underline;text-decoration-thickness:1.4px;text-underline-offset:2.5px;">Analyze SERP</div>
<div class="t" style="left:131.6px;top:1212.1px;font-size:20px;line-height:28px;font-weight:400;color:#4a6088;letter-spacing:0.126px;text-decoration:underline;text-decoration-thickness:1.2px;text-underline-offset:3px;text-decoration-color:#a9b6cd;">step by step internet marketing</div>
<div class="t" style="left:861.5px;top:1212.8px;font-size:20px;line-height:28px;font-weight:400;color:#2b2b2b;letter-spacing:-0.125px;">5</div>
<div class="t" style="left:1189.0px;top:1212.8px;font-size:20px;line-height:28px;font-weight:400;color:#2b2b2b;letter-spacing:0.375px;">Informational</div>
<div class="t" style="left:1675.5px;top:1213.3px;font-size:20px;line-height:28px;font-weight:400;color:#1f3d5c;letter-spacing:-0.673px;text-decoration:underline;text-decoration-thickness:1.4px;text-underline-offset:2.5px;">Analyze SERP</div>
<div class="a" style="left:1127px;top:574.700px;width:241.700px;height:680.700px;border:4px solid #eb3612"></div>
<div class="a" style="left:1929px;top:990px;width:3px;height:280px;background:#fff"></div>
<div class="a" style="left:1931px;top:999.500px;width:9.5px;height:280px;background:#bfbfbf;border-radius:5px 5px 0 0"></div>
<div class="a" style="left:1811.900px;top:1173.800px;width:157.800px;height:67px;border-radius:33.500px;background:#7da505"></div>
<svg class="a" style="left:1843.700px;top:1191.800px" width="30" height="30" viewBox="0 0 30 30"><circle cx="15" cy="15" r="13.050" fill="none" stroke="#234208" stroke-width="2.900"/><text x="15" y="22.200" text-anchor="middle" font-family="Liberation Sans, sans-serif" font-weight="400" font-size="20" fill="#234208" stroke="#234208" stroke-width="0.700" textLength="9.500" lengthAdjust="spacingAndGlyphs">?</text></svg>
<div class="t" style="left:1885.400px;top:1192.300px;font-size:20.800px;line-height:30px;font-weight:700;color:#213f06;-webkit-text-stroke:0.5px #213f06;letter-spacing:1.100px;transform-origin:0 50%;transform:scaleX(1.07)">Help</div>
</div></body></html>
